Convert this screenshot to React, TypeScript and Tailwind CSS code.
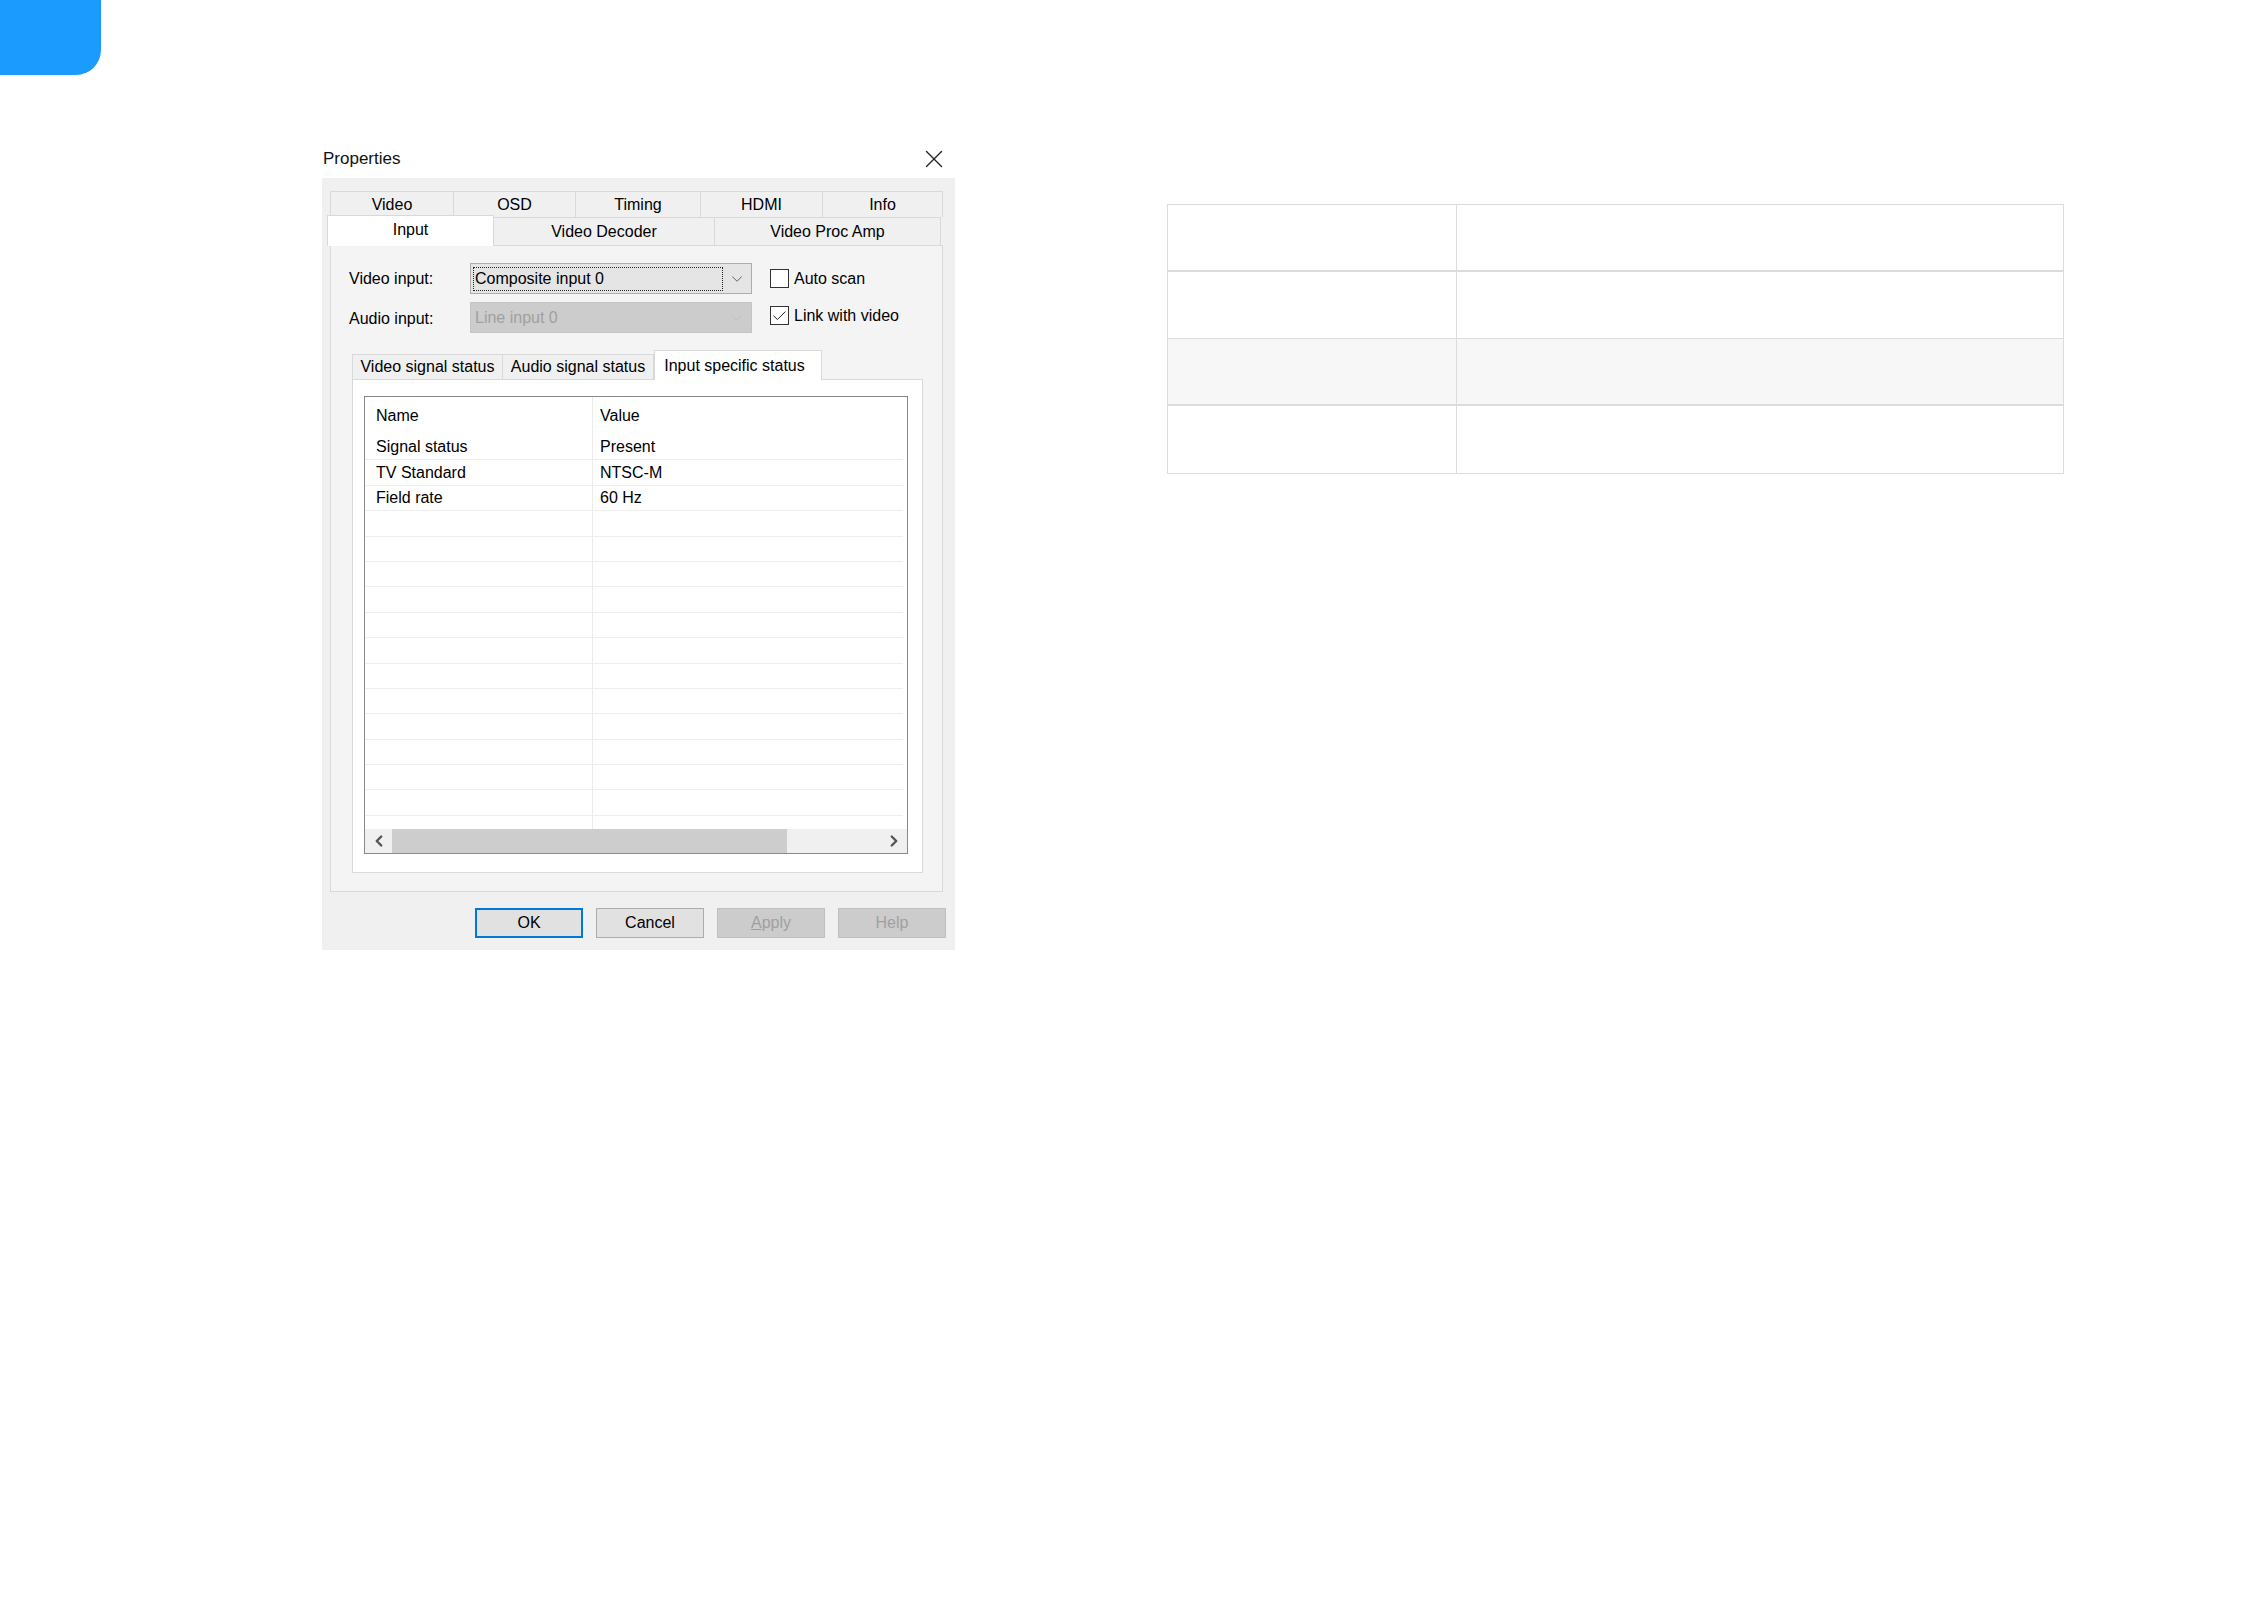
import { X, ChevronDown, ChevronLeft, ChevronRight, Check } from 'lucide-react';

const topTabs = [
  { label: 'Video', w: 'w-[123px]' },
  { label: 'OSD', w: 'w-[122px]' },
  { label: 'Timing', w: 'w-[125px]' },
  { label: 'HDMI', w: 'w-[122px]' },
  { label: 'Info', w: 'w-[121px]' },
];

const statusRows: [string, string][] = [
  ['Signal status', 'Present'],
  ['TV Standard', 'NTSC-M'],
  ['Field rate', '60 Hz'],
  ...Array.from({ length: 13 }, () => ['', ''] as [string, string]),
];

function Combo({ value, disabled }: { value: string; disabled?: boolean }) {
  return (
    <div
      className={`flex h-[31px] w-[282px] items-center border pl-[2px] pr-[5px] ${
        disabled ? 'border-[#c4c4c4] bg-[#cccccc] text-[#a0a0a0]' : 'border-[#adadad] bg-[#e5e5e5] text-black'
      }`}
    >
      <div className={`flex h-[24px] w-[250px] items-center pl-[1px] ${disabled ? 'pl-[2px]' : 'border border-dotted border-[#222]'}`}>{value}</div>
      <ChevronDown size={18} strokeWidth={1.2} className={`ml-auto ${disabled ? 'text-[#c0c0c0]' : 'text-[#555]'}`} />
    </div>
  );
}

function CheckBox({ label, checked }: { label: string; checked?: boolean }) {
  return (
    <div className="flex items-center gap-[5px]">
      <div className="flex h-[19px] w-[19px] items-center justify-center border border-[#333] bg-white">
        {checked && <Check size={18} strokeWidth={1.4} className="text-[#222]" />}
      </div>
      <span>{label}</span>
    </div>
  );
}

function StatusList() {
  return (
    <div className="flex h-[458px] w-[544px] flex-col border border-[#8a8a8a] bg-white">
      <div className="flex-1 overflow-hidden">
        <div className="flex h-[38px]">
          <div className="flex w-[227px] items-center pl-[11px]">Name</div>
          <div className="flex flex-1 items-center border-l border-[#ececec] pl-[7px]">Value</div>
        </div>
        {statusRows.map(([name, value], i) => (
          <div key={i} className="mr-[4px] flex h-[25.4px] border-b border-[#eeeeee]">
            <div className="flex w-[227px] items-center pl-[11px]">{name}</div>
            <div className="flex flex-1 items-center border-l border-[#ececec] pl-[7px]">{value}</div>
          </div>
        ))}
      </div>
      <div className="flex h-[24px] bg-[#f0f0f0]">
        <div className="flex w-[27px] items-center justify-center text-[#555]">
          <ChevronLeft size={18} strokeWidth={3.2} />
        </div>
        <div className="h-full w-[395px] bg-[#cdcdcd]" />
        <div className="flex-1" />
        <div className="flex w-[27px] items-center justify-center text-[#555]">
          <ChevronRight size={18} strokeWidth={3.2} />
        </div>
      </div>
    </div>
  );
}

function DialogButton({ label, primary, disabled }: { label: React.ReactNode; primary?: boolean; disabled?: boolean }) {
  return (
    <div
      className={`flex h-[30px] w-[108px] items-center justify-center ${
        primary
          ? 'border-2 border-[#0078d7] bg-[#e1e1e1] text-black'
          : disabled
          ? 'border border-[#bfbfbf] bg-[#cccccc] text-[#a0a0a0]'
          : 'border border-[#adadad] bg-[#e1e1e1] text-black'
      }`}
    >
      {label}
    </div>
  );
}

function PropertiesDialog() {
  return (
    <div className="w-[633px] text-[16px] text-black">
      <div className="flex h-[38px] items-center justify-between pl-[1px]">
        <span className="text-[17px] text-[#111]">Properties</span>
        <X size={30} strokeWidth={1.1} className="mr-[6px] text-[#222]" />
      </div>
      <div className="flex h-[772px] flex-col bg-[#f0f0f0] pl-[8px] pt-[13px]">
        <div className="w-[613px]">
          <div className="flex h-[26px]">
            {topTabs.map((t) => (
              <div key={t.label} className={`${t.w} flex items-center justify-center border border-r-0 border-b-0 border-[#d9d9d9] bg-[#f0f0f0] last:border-r`}>
                {t.label}
              </div>
            ))}
          </div>
          <div className="relative flex h-[28px] items-end">
            <div className="relative z-10 -mb-px -ml-[3px] flex h-[31px] w-[167px] items-start justify-center border border-b-0 border-[#d9d9d9] bg-white pt-[2px]">
              Input
            </div>
            <div className="flex h-[28px] w-[220px] items-center justify-center border-t border-[#d9d9d9] bg-[#f0f0f0]">Video Decoder</div>
            <div className="flex h-[28px] w-[227px] items-center justify-center border border-b-0 border-[#d9d9d9] bg-[#f0f0f0]">Video Proc Amp</div>
          </div>
          <div className="h-[647px] border border-[#d9d9d9] bg-[#f4f4f4] pl-[18px] pt-[17px]">
            <div className="flex h-[31px] items-center">
              <div className="w-[121px]">Video input:</div>
              <Combo value="Composite input 0" />
              <div className="ml-[18px]">
                <CheckBox label="Auto scan" />
              </div>
            </div>
            <div className="mt-[8px] flex h-[31px] items-center">
              <div className="w-[121px] pt-[3px]">Audio input:</div>
              <Combo value="Line input 0" disabled />
              <div className="ml-[18px] -mt-[4px]">
                <CheckBox label="Link with video" checked />
              </div>
            </div>
            <div className="ml-[3px] mt-[20px] w-[571px]">
              <div className="flex h-[26px] items-end">
                <div className="flex h-[25px] w-[150px] items-center justify-center border border-r-0 border-b-0 border-[#d9d9d9] bg-[#f0f0f0]">Video signal status</div>
                <div className="flex h-[25px] w-[152px] items-center justify-center border border-b-0 border-[#d9d9d9] bg-[#f0f0f0]">Audio signal status</div>
                <div className="relative z-10 -mb-px flex h-[30px] w-[168px] items-start justify-center border border-b-0 border-[#d9d9d9] bg-white pl-[1px] pr-[8px] pt-[3px]">
                  Input specific status
                </div>
              </div>
              <div className="h-[494px] border border-[#d9d9d9] bg-white pl-[11px] pt-[16px]">
                <StatusList />
              </div>
            </div>
          </div>
        </div>
        <div className="mt-[16px] flex justify-end gap-[13px] pr-[9px]">
          <DialogButton label="OK" primary />
          <DialogButton label="Cancel" />
          <DialogButton label={<><span className="underline">A</span>pply</>} disabled />
          <DialogButton label="Help" disabled />
        </div>
      </div>
    </div>
  );
}

function EmptyTable() {
  const rows = [
    { bg: 'bg-white', b: 'border-b-2' },
    { bg: 'bg-white', b: 'border-b' },
    { bg: 'bg-[#f7f7f7]', b: 'border-b-2' },
    { bg: 'bg-white', b: '' },
  ];
  return (
    <div className="w-[897px] border border-[#dcdcdc]">
      {rows.map((r, i) => (
        <div key={i} className={`flex h-[67px] ${r.bg} ${r.b} border-[#dcdcdc]`}>
          <div className="w-[289px] border-r border-[#dcdcdc]" />
          <div className="flex-1" />
        </div>
      ))}
    </div>
  );
}

export default function App() {
  return (
    <div className="min-h-[1600px] bg-white font-['Liberation_Sans',Arial,sans-serif]">
      <div className="h-[75px] w-[101px] rounded-br-[25px] bg-[#1c9bff]" />
      <div className="mt-[65px] flex items-start pl-[322px]">
        <PropertiesDialog />
        <div className="ml-[212px] mt-[64px]">
          <EmptyTable />
        </div>
      </div>
    </div>
  );
}
